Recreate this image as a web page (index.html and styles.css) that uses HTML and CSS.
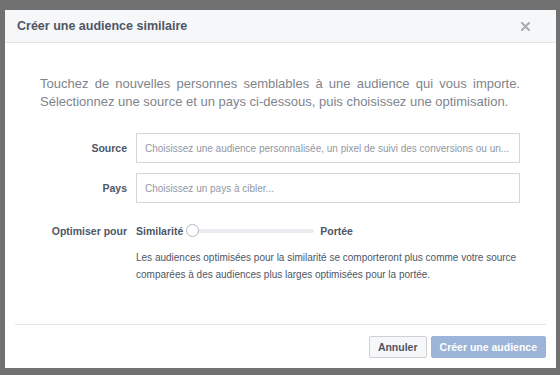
FILE: index.html
```html
<!DOCTYPE html>
<html lang="fr">
<head>
    <meta charset="UTF-8">
    <title>Créer une audience similaire</title>
    <link rel="stylesheet" href="styles.css">
</head>
<body>
    <div class="modal">
        <div class="modal-header">
            <h1>Créer une audience similaire</h1>
            <span class="close">
                <svg width="9" height="9" viewBox="0 0 9 9"><path d="M1 1L8 8M8 1L1 8" stroke="#a7abb1" stroke-width="2" stroke-linecap="round"/></svg>
            </span>
        </div>
        <div class="modal-body">
            <p class="intro">Touchez de nouvelles personnes semblables à une audience qui vous importe. Sélectionnez une source et un pays ci-dessous, puis choisissez une optimisation.</p>

            <div class="row">
                <label>Source</label>
                <div class="field">Choisissez une audience personnalisée, un pixel de suivi des conversions ou un...</div>
            </div>
            <div class="row">
                <label>Pays</label>
                <div class="field">Choisissez un pays à cibler...</div>
            </div>
            <div class="row row-slider">
                <label>Optimiser pour</label>
                <div class="slider">
                    <span class="slider-end">Similarité</span>
                    <div class="track"><span class="knob"></span></div>
                    <span class="slider-end">Portée</span>
                </div>
            </div>
            <p class="note">Les audiences optimisées pour la similarité se comporteront plus comme votre source comparées à des audiences plus larges optimisées pour la portée.</p>
        </div>
        <div class="modal-footer">
            <button class="btn">Annuler</button>
            <button class="btn btn-primary">Créer une audience</button>
        </div>
    </div>
</body>
</html>
```

FILE: styles.css
```css
body {
    margin: 0;
    padding: 10px 4px 0 5px;
    background-color: #717171;
    font-family: Helvetica, 'Liberation Sans', Arial, sans-serif;
    width: 560px;
    height: 375px;
    box-sizing: border-box;
    overflow: hidden;
}
.modal {
    width: 551px;
    height: 358px;
    background-color: #fff;
    display: flex;
    flex-direction: column;
}
.modal-header {
    height: 33px;
    background-color: #f6f7f9;
    border-bottom: 1px solid #e5e5e5;
    display: flex;
    align-items: center;
    justify-content: space-between;
    padding: 0 26px 0 12px;
    box-sizing: border-box;
}
.modal-header h1 {
    margin: 0;
    font-size: 12.5px;
    font-weight: bold;
    color: #4e5665;
}
.close {
    display: flex;
    margin-top: 1px;
}
.modal-body {
    flex: 1;
    padding: 0 36px 0 35px;
}
.intro {
    margin: 32px 0 22px;
    font-size: 13px;
    line-height: 18px;
    color: #80848c;
    text-align: justify;
}
.row {
    display: flex;
    align-items: center;
    margin-bottom: 10px;
}
.row label {
    width: 87px;
    flex-shrink: 0;
    text-align: right;
    padding-right: 9px;
    font-size: 10.5px;
    font-weight: bold;
    color: #4e5665;
}
.field {
    flex: 1;
    height: 30px;
    border: 1px solid #d3d6db;
    box-sizing: border-box;
    padding: 0 8px;
    display: flex;
    align-items: center;
    font-size: 10px;
    color: #9197a3;
    white-space: nowrap;
    overflow: hidden;
}
.row-slider {
    margin-top: 22px;
    margin-bottom: 0;
}
.slider {
    display: flex;
    align-items: center;
}
.slider-end {
    font-size: 10.5px;
    font-weight: bold;
    color: #4e5665;
}
.track {
    position: relative;
    width: 128px;
    height: 4px;
    margin: 0 6px 0 3px;
    background-color: #e9ebee;
    border-radius: 2px;
}
.knob {
    position: absolute;
    left: 0;
    top: -5px;
    width: 13px;
    height: 13px;
    border-radius: 50%;
    background-color: #fff;
    border: 1px solid #b4b8bf;
    box-sizing: border-box;
}
.note {
    margin: 12px 0 0 96px;
    font-size: 10px;
    line-height: 17px;
    color: #4e5665;
}
.modal-footer {
    margin: 0 10px;
    height: 43px;
    border-top: 1px solid #e5e5e5;
    display: flex;
    justify-content: flex-end;
    align-items: center;
    gap: 4px;
}
.btn {
    height: 22px;
    padding: 0 8px;
    border: 1px solid #ced0d4;
    border-radius: 2px;
    background-color: #f6f7f9;
    color: #4e5665;
    font-family: inherit;
    font-size: 10.5px;
    font-weight: bold;
}
.btn-primary {
    background-color: #9cb4d8;
    border-color: #9cb4d8;
    color: #fff;
}
```
